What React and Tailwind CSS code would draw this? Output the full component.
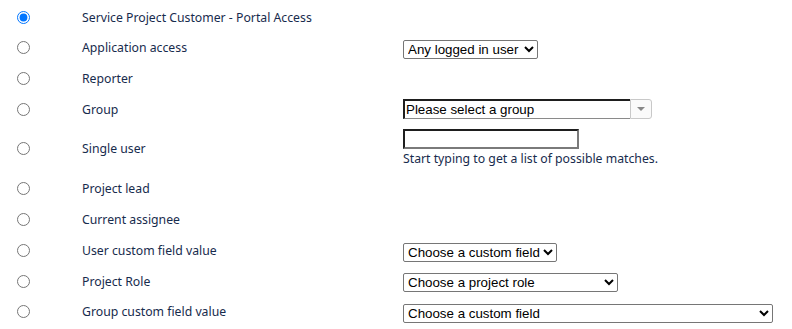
import React from "react";

function Sel({ w, children }) {
  return (
    <select
      className="h-[19px] border border-[#767676] rounded-[2px] bg-white text-black text-[13.333px] leading-[15px] font-['Liberation_Sans',Arial,sans-serif] pl-0"
      style={{ width: w }}
      defaultValue="a"
    >
      <option value="a">{children}</option>
    </select>
  );
}

function Row({ h = "h-[31px]", checked, label, children }) {
  return (
    <div className={`flex items-center ${h}`}>
      <div className="w-[82px] flex items-center pl-[17px]">
        <input
          type="radio"
          name="perm"
          defaultChecked={checked}
          className="m-0 w-[13px] h-[13px]"
        />
      </div>
      <div className="w-[321px] pt-[2px] text-[12.25px] text-[#172b4d] font-['Noto_Sans','Open_Sans',sans-serif]">
        {label}
      </div>
      <div className="flex-1">{children}</div>
    </div>
  );
}

export default function App() {
  return (
    <div className="w-[792px] h-[329px] bg-white pt-[2px] overflow-hidden">
      <Row h="h-[30px]" checked label="Service Project Customer - Portal Access" />
      <Row label="Application access">
        <Sel w="135px">Any logged in user</Sel>
      </Row>
      <Row label="Reporter" />
      <Row h="h-[30px]" label="Group">
        <div className="flex h-[20px] w-[249px]">
          <div className="flex-1 border-t-2 border-l-2 border-b border-t-[#1e1e1e] border-l-[#1e1e1e] border-b-[#8a8a8a] bg-white text-black text-[13.333px] leading-[17px] font-['Liberation_Sans',Arial,sans-serif] pl-[1px]">
            Please select a group
          </div>
          <div className="w-[22px] border border-[#c8c8c8] rounded-r-[3px] bg-[#fafafa] flex items-center justify-center">
            <svg width="8" height="4" viewBox="0 0 8 4">
              <path d="M0 0 L8 0 L4 4 Z" fill="#888" />
            </svg>
          </div>
        </div>
      </Row>
      <Row h="h-[49px]" label="Single user">
        <div className="flex flex-col">
          <div className="w-[176px] h-[20px] border-2 border-t-[#1e1e1e] border-l-[#1e1e1e] border-b-[#7a7a7a] border-r-[#7a7a7a] bg-white" />
          <div className="text-[12.25px] leading-[18px] text-[#172b4d] font-['Noto_Sans','Open_Sans',sans-serif] mt-[1px]">
            Start typing to get a list of possible matches.
          </div>
        </div>
      </Row>
      <Row label="Project lead" />
      <Row label="Current assignee" />
      <Row label="User custom field value">
        <Sel w="154px">Choose a custom field</Sel>
      </Row>
      <Row h="h-[30px]" label="Project Role">
        <Sel w="215px">Choose a project role</Sel>
      </Row>
      <Row h="h-[31px]" label="Group custom field value">
        <Sel w="370px">Choose a custom field</Sel>
      </Row>
    </div>
  );
}
